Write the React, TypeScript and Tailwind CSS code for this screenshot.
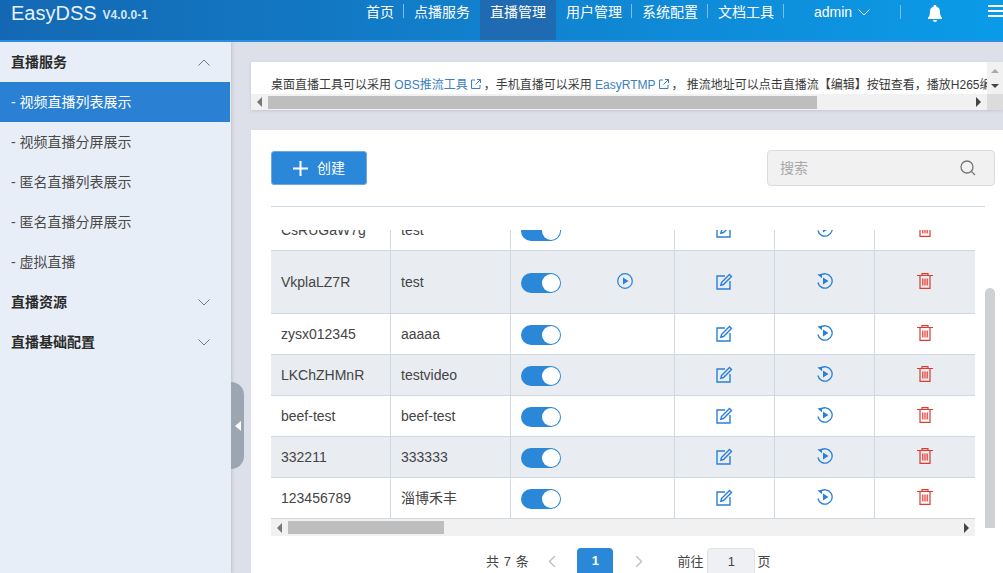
import type { ReactNode } from 'react'

const font = '[font-family:"Liberation_Sans","Noto_Sans_CJK_SC",sans-serif]'

const navItems = [
  { label: '首页', sep: true },
  { label: '点播服务', sep: false },
  { label: '直播管理', sep: false, active: true },
  { label: '用户管理', sep: true },
  { label: '系统配置', sep: true },
  { label: '文档工具', sep: true },
]

const rows = [
  { id: 'CsRUGaW7g', name: 'test', h: 'h-[41px]' },
  { id: 'VkplaLZ7R', name: 'test', h: 'h-[63px]', play: true, alt: true },
  { id: 'zysx012345', name: 'aaaaa', h: 'h-[41px]' },
  { id: 'LKChZHMnR', name: 'testvideo', h: 'h-[41px]', alt: true },
  { id: 'beef-test', name: 'beef-test', h: 'h-[41px]' },
  { id: '332211', name: '333333', h: 'h-[41px]', alt: true },
  { id: '123456789', name: '淄博禾丰', h: 'h-[41px]' },
]

function Chevron({ up, className, width = 1 }: { up?: boolean; className?: string; width?: number }) {
  return (
    <svg viewBox="0 0 12 7" className={className} fill="none" stroke="currentColor" strokeWidth={width}>
      <path d={up ? 'M.5 6.500 6 1l5.500 5.500' : 'M.5.5 6 6 11.500.5'} />
    </svg>
  )
}

function ExternalIcon() {
  return (
    <svg viewBox="0 0 12 12" className="mx-[2px] inline-block h-3 w-3 align-[-1px] text-[#3a80c2]" fill="none" stroke="currentColor" strokeWidth="1">
      <path d="M5 2H1.500v8.500H10V7M7 1.500h3.500V5M10.500 1.500 5.500 6.500" />
    </svg>
  )
}

function PlayIcon() {
  return (
    <svg viewBox="0 0 16 16" className="h-4 w-4 text-[#2a80d8]" fill="none" stroke="currentColor" strokeWidth="1.200">
      <circle cx="8" cy="8" r="7.300" />
      <path d="M6 4.500v7L11.500 8z" fill="currentColor" stroke="none" />
    </svg>
  )
}

function EditIcon() {
  return (
    <svg viewBox="0 0 17 17" className="h-[17px] w-[17px] text-[#2a80d8]" fill="none" stroke="currentColor" strokeWidth="1.400">
      <path d="M9 3H1v13h13V8" />
      <path d="M5.500 9.500 13.500 1.500l2 2-8 8-2.700.7z" />
    </svg>
  )
}

function ReplayIcon() {
  return (
    <svg viewBox="0 0 16 16" className="h-4 w-4 text-[#2a80d8]" fill="none" stroke="currentColor" strokeWidth="1.300">
      <path d="M3 2.700A7.200 7.200 0 1 1 .9 9.500" />
      <path d="M.4 1.600 5 .7 5 5.200z" fill="currentColor" stroke="none" />
      <path d="M6 4.500v7L11.500 8z" fill="currentColor" stroke="none" />
    </svg>
  )
}

function TrashIcon() {
  return (
    <svg viewBox="0 0 16 16" className="h-4 w-4 text-[#e0392e]" fill="none" stroke="currentColor" strokeWidth="1.200">
      <path d="M0 2.500h16M5 2.500V.7h6v1.800M3 2.500v12.800h10V2.500" />
      <path d="M5.800 5.500v7M8 5.500v7M10.200 5.500v7" />
    </svg>
  )
}

function NavSep() {
  return <span className="block h-[14px] w-px bg-[#7fbce8]" />
}

function Header() {
  return (
    <header className="flex h-[42px] shrink-0 border-b-2 border-[#2a90ea] bg-gradient-to-r from-[#1468b3] to-[#0a9be8] text-white">
      <div className="flex h-[26px] items-center pl-[11px]">
        <span className="text-[20px] leading-none text-[#e6f2fb]">EasyDSS</span>
        <span className="ml-[6px] mt-[3px] text-[12px] font-bold text-[#d5e6f5]">V4.0.0-1</span>
      </div>
      <nav className="ml-auto flex items-start text-[14px]">
        {navItems.map((item) => (
          <div key={item.label} className="flex h-10 items-start">
            <span className={`flex h-10 items-start justify-center px-2.5 pt-[3px] leading-[18px] ${item.active ? 'bg-[#1f6ab0]' : ''}`}>
              {item.label}
            </span>
            {item.sep ? <div className="-ml-px mt-[4px]"><NavSep /></div> : null}
          </div>
        ))}
        <div className="flex h-6 w-[117px] items-center pl-[30px]">
          <span className="leading-none">admin</span>
          <Chevron className="ml-[6px] h-[7px] w-3" />
          <span className="ml-auto -mt-[1px]"><NavSep /></span>
        </div>
        <div className="flex h-[26px] w-[102px] items-center pl-[26px]">
          <svg viewBox="0 0 16 17" className="h-[17px] w-4" fill="currentColor">
            <path d="M8 0a1.300 1.300 0 0 0-1.300 1.500C4.300 2.100 3 4.100 3 6.500c0 3.500-.8 5-2 6.300V14h14v-1.200c-1.200-1.300-2-2.800-2-6.300 0-2.400-1.300-4.400-3.700-5A1.300 1.300 0 0 0 8 0zM6 15a2 2 0 0 0 4 0z" />
          </svg>
          <div className="-mt-[4px] ml-auto flex w-[15px] flex-col gap-[3px]">
            <span className="h-[2px] bg-white" />
            <span className="h-[2px] bg-white" />
            <span className="h-[2px] bg-white" />
          </div>
        </div>
      </nav>
    </header>
  )
}

function SectionTitle({ label, up }: { label: string; up?: boolean }) {
  return (
    <div className="flex h-10 items-center justify-between pl-[11px] pr-[21px] text-[14px] font-bold text-[#2b2b2b]">
      <span>{label}</span>
      <Chevron up={up} className="h-[7px] w-[12px] text-[#6f7b88]" />
    </div>
  )
}

function Sidebar() {
  const items = ['- 视频直播列表展示', '- 视频直播分屏展示', '- 匿名直播列表展示', '- 匿名直播分屏展示', '- 虚拟直播']
  return (
    <aside className="relative z-10 w-[231px] shrink-0 bg-[#e8eef7] shadow-[1px_0_3px_rgba(90,100,120,0.25)]">
      <SectionTitle label="直播服务" up />
      {items.map((label, i) => (
        <div
          key={label}
          className={`flex h-10 items-center pl-[11px] text-[14px] ${i === 0 ? 'mr-px bg-[#2a80d2] text-white' : 'text-[#4a4a4a]'}`}
        >
          {label}
        </div>
      ))}
      <SectionTitle label="直播资源" />
      <SectionTitle label="直播基础配置" />
      <div className="absolute left-[231px] top-[340px] flex h-[87px] w-[13px] items-center rounded-r-[13px] bg-[#9ca6b2] pl-1">
        <span className="h-0 w-0 border-y-[5px] border-r-[6px] border-y-transparent border-r-white" />
      </div>
    </aside>
  )
}

function Arrow({ dir }: { dir: 'left' | 'right' }) {
  return dir === 'left' ? (
    <span className="h-0 w-0 border-y-[5px] border-r-[5px] border-y-transparent border-r-[#777]" />
  ) : (
    <span className="h-0 w-0 border-y-[5px] border-l-[5px] border-y-transparent border-l-[#444]" />
  )
}

function Notice() {
  return (
    <section className="mt-5 flex h-[48px] shrink-0 bg-white shadow-[0_1px_3px_rgba(90,100,120,0.2)]">
      <div className="flex w-[736px] flex-col">
        <div className="h-8 overflow-hidden whitespace-nowrap pl-5 pt-[14px] text-[12px] leading-[18px] text-[#3a3a3a]">
          桌面直播工具可以采用 <span className="text-[#3a80c2]">OBS推流工具</span>
          <ExternalIcon />，手机直播可以采用 <span className="text-[#3a80c2]">EasyRTMP</span>
          <ExternalIcon />，&nbsp;推流地址可以点击直播流【编辑】按钮查看，播放H265编码的视频
        </div>
        <div className="flex h-4 items-center bg-[#f1f1f1]">
          <div className="flex w-[17px] justify-center"><Arrow dir="left" /></div>
          <div className="h-[13px] w-[549px] bg-[#bebebe]" />
          <div className="ml-auto flex w-[17px] justify-center"><Arrow dir="right" /></div>
        </div>
      </div>
      <div className="flex w-4 flex-col bg-[#f1f1f1]">
        <div className="flex flex-1 flex-col items-center justify-center gap-[11px] pt-px">
          <span className="h-0 w-0 border-x-[4px] border-b-[4px] border-x-transparent border-b-[#aaa]" />
          <span className="h-0 w-0 border-x-[4px] border-t-[4px] border-x-transparent border-t-[#444]" />
        </div>
        <div className="h-4 bg-[#dcdcdc]" />
      </div>
    </section>
  )
}

function Cell({ children, last, center }: { children: ReactNode; last?: boolean; center?: boolean }) {
  return (
    <div className={`flex items-center ${center ? 'justify-center pb-[2px]' : ''} ${last ? '' : 'border-r border-[#cfd9e2]'}`}>
      {children}
    </div>
  )
}

function Switch() {
  return (
    <span className="mt-[2px] flex h-5 w-10 items-center justify-end rounded-full bg-[#2b88d8] pr-px">
      <span className="h-[18px] w-[18px] rounded-full bg-white" />
    </span>
  )
}

function Table() {
  return (
    <div className="h-[289px] w-[704px] overflow-hidden">
      <div className="-mt-[20px]">
        {rows.map((row) => (
          <div
            key={row.id}
            className={`grid grid-cols-[120px_120px_164px_100px_100px_100px] border-b border-[#cfd9e2] text-[14px] text-[#444] ${row.h} ${row.alt ? 'bg-[#e9ecf1]' : 'bg-white'}`}
          >
            <Cell><span className="pl-[10px]">{row.id}</span></Cell>
            <Cell><span className="pl-[10px]">{row.name}</span></Cell>
            <Cell>
              <span className="ml-[10px]"><Switch /></span>
              {row.play ? <span className="ml-[56px] pb-[2px]"><PlayIcon /></span> : null}
            </Cell>
            <Cell center><EditIcon /></Cell>
            <Cell center><ReplayIcon /></Cell>
            <Cell center last><TrashIcon /></Cell>
          </div>
        ))}
      </div>
    </div>
  )
}

function Pagination() {
  return (
    <div className="mt-3 flex h-[26px] w-[704px] items-start text-[13px] text-[#444]">
      <span className="ml-[215px] mt-[5px] leading-[18px] tracking-[0.6px]">共 7 条</span>
      <Chevron className="ml-[17px] mt-[10px] h-[7px] w-3 rotate-90 text-[#c0c4cc]" width={1.600} />
      <span className="ml-[19px] flex h-[26px] w-9 items-center justify-center rounded-t-[4px] bg-[#2b88d8] font-bold text-white">1</span>
      <Chevron className="ml-[20px] mt-[10px] h-[7px] w-3 -rotate-90 text-[#c0c4cc]" width={1.600} />
      <span className="ml-[32px] mt-[5px] leading-[18px]">前往</span>
      <span className="ml-[4px] flex h-[26px] w-12 items-center justify-center rounded-t-[4px] border border-b-0 border-[#dfe3e8] bg-[#eef0f3]">1</span>
      <span className="ml-[2px] mt-[5px] leading-[18px]">页</span>
    </div>
  )
}

function ListPanel() {
  return (
    <section className="relative mt-5 flex-1 bg-white pl-5">
      <div className="flex h-[76px] w-[724px] items-start justify-between pt-5">
        <button className="mt-px flex h-[34px] w-[96px] items-center rounded-[3px] border border-[#6aaae4] bg-[#2b88d8] pl-[21px] text-[14px] text-white">
          <svg viewBox="0 0 15 15" className="h-[15px] w-[15px]" stroke="currentColor" strokeWidth="2">
            <path d="M7.500 0v15M0 7.500h15" />
          </svg>
          <span className="ml-[9px]">创建</span>
        </button>
        <div className="flex h-9 w-[228px] items-center justify-between rounded-[4px] border border-[#dcdcdc] bg-[#f1f1f1] pl-3 pr-[18px] text-[14px] text-[#a8a8a8]">
          <span>搜索</span>
          <svg viewBox="0 0 16 16" className="h-4 w-4 text-[#777]" fill="none" stroke="currentColor" strokeWidth="1.300">
            <circle cx="7" cy="7" r="6" />
            <path d="m11.500 11.500 3.500 3.500" />
          </svg>
        </div>
      </div>
      <div className="h-px w-[714px] bg-[#cfd9e2]" />
      <div className="h-[23px]" />
      <Table />
      <div className="flex h-[17px] w-[704px] items-center bg-[#f1f1f1]">
        <div className="flex w-[17px] justify-center"><Arrow dir="left" /></div>
        <div className="h-[13px] w-[156px] bg-[#bebebe]" />
        <div className="ml-auto flex w-[17px] justify-center"><Arrow dir="right" /></div>
      </div>
      <Pagination />
      <div className="absolute left-[734px] top-[158px] h-[240px] w-[10px] rounded-t-[5px] bg-[#cdd1d4]" />
    </section>
  )
}

export default function App() {
  return (
    <div className={`flex h-[573px] w-[1003px] flex-col overflow-hidden bg-[#dde0e9] ${font}`}>
      <Header />
      <div className="flex min-h-0 flex-1">
        <Sidebar />
        <main className="flex w-[772px] shrink-0 flex-col pl-5">
          <Notice />
          <ListPanel />
        </main>
      </div>
    </div>
  )
}
